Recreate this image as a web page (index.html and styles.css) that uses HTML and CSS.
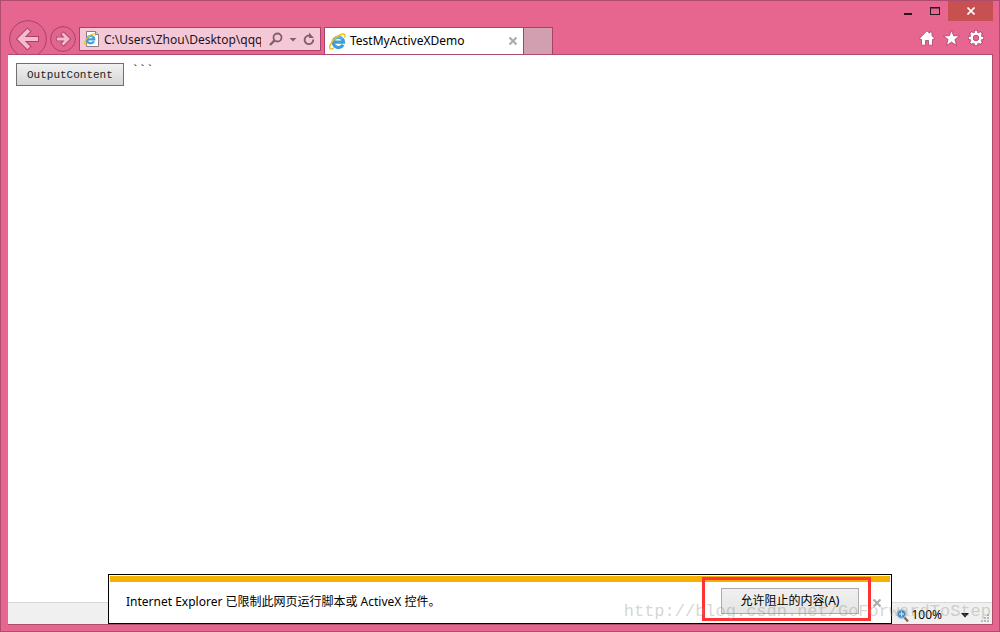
FILE: index.html
```html
<!DOCTYPE html>
<html lang="zh-CN">
<head>
<meta charset="utf-8">
<title>TestMyActiveXDemo</title>
<link rel="stylesheet" href="styles.css">
</head>
<body>
<svg class="defs" width="0" height="0" aria-hidden="true">
  <symbol id="ie" viewBox="0 0 16 16">
    <path d="M13.200 11A4.900 4.900 0 1 1 13.700 8.500H5" fill="none" stroke="#3d9fd8" stroke-width="3"/>
    <path d="M4.200 6.500A4.900 4.900 0 0 1 12.500 5.500" fill="none" stroke="#6cc1ea" stroke-width="1"/>
    <path d="M4.500 14.200C1.500 15.800-.3 14.800 1.300 11.200 3.300 6.500 9.500 1.200 13.300.9c2.200-.1 2 1.500 1.300 3.300" fill="none" stroke="#f3bd19" stroke-width="1.400"/>
  </symbol>
</svg>
<div class="window">
  <header class="chrome">
    <nav class="navigation">
      <button class="round back" aria-label="后退"><svg width="38" height="38" viewBox="0 0 38 38"><circle cx="19" cy="19" r="18.3" fill="#e2658f" stroke="#a94269"/><g fill="none"><path d="M30 19H11M20.500 9.500L11 19l9.500 9.500" stroke="#a94269" stroke-width="6"/><path d="M29 19H11M19.800 10.200L11 19l8.800 8.800" stroke="#f6b9ce" stroke-width="4"/></g></svg></button>
      <button class="round forward" aria-label="前进"><svg width="26" height="26" viewBox="0 0 26 26"><circle cx="13" cy="13" r="12.400" fill="#e2658f" stroke="#a94269"/><g fill="none"><path d="M6 13h12M12 7l6 6-6 6" stroke="#a94269" stroke-width="4.600"/><path d="M6.800 13H18M12.500 7.500L18 13l-5.500 5.500" stroke="#f6b9ce" stroke-width="2.800"/></g></svg></button>
      <div class="address">
        <svg class="page-icon" width="16" height="16" viewBox="0 0 16 16" aria-hidden="true"><path d="M2.500.5h9l3 3v12h-12z" fill="#fff" stroke="#8b7b82"/><path d="M11.500.5v3h3" fill="#ddd" stroke="#8b7b82"/><svg x="0" y="2" width="12" height="12"><use href="#ie"/></svg></svg>
        <input class="url" aria-label="地址" value="C:\Users\Zhou\Desktop\qqq">
        <button class="tool" aria-label="搜索"><svg width="14" height="14" viewBox="0 0 14 14"><circle cx="8.500" cy="5.500" r="4" fill="none" stroke="#80606d" stroke-width="1.800"/><path d="M5.600 8.400L1 13" stroke="#80606d" stroke-width="2.400"/></svg></button>
        <button class="tool" aria-label="显示下拉列表"><svg width="8" height="14" viewBox="0 0 8 14"><path d="M.5 6h7L4 9.500z" fill="#80606d"/></svg></button>
        <button class="tool" aria-label="刷新"><svg width="12" height="14" viewBox="0 0 12 14"><path d="M10.200 7.500A4.300 4.300 0 1 1 7.500 3.800" fill="none" stroke="#80606d" stroke-width="1.900"/><path d="M6 .5v5.500h5z" fill="#80606d"/></svg></button>
      </div>
    </nav>
    <div class="tab">
      <svg width="17" height="17" aria-hidden="true"><use href="#ie"/></svg>
      <span class="tab-title">TestMyActiveXDemo</span>
      <button class="close" aria-label="关闭选项卡"><svg width="10" height="10" viewBox="0 0 10 10"><path d="M1.500 1.500l7 7m0-7l-7 7" stroke="#aaa" stroke-width="2"/></svg></button>
    </div>
    <button class="new-tab" aria-label="新建选项卡"></button>
    <div class="right">
      <div class="caption">
        <button aria-label="最小化"><svg width="8" height="12" viewBox="0 0 8 12"><path d="M0 9h8" stroke="#271720" stroke-width="2"/></svg></button>
        <button aria-label="最大化"><svg width="10" height="12" viewBox="0 0 10 12"><path d="M0 3h10M.5 2v8M9.500 2v8M0 9.500h10" fill="none" stroke="#271720"/><path d="M0 2.500h10" stroke="#271720"/></svg></button>
        <button class="quit" aria-label="关闭"><svg width="8" height="8" viewBox="0 0 8 8"><path d="M.5.5l7 7m0-7l-7 7" stroke="#fff" stroke-width="1.600"/></svg></button>
      </div>
      <div class="commands">
        <button aria-label="主页"><svg width="16" height="16" viewBox="0 0 16 16"><path d="M8 .8L.8 8v1.500h1.700v5.700h4v-4.700h3v4.700h4V9.500h1.700V8l-2.200-2.200V2h-2.500v1.300z" fill="#fff" stroke="#a94269" stroke-width=".8"/></svg></button>
        <button aria-label="收藏夹"><svg width="17" height="16" viewBox="0 0 17 16"><path d="M8.500.2l2.100 5.500 6 .1-4.700 3.700 1.700 6-5.100-3.400-5.100 3.400 1.700-6L.4 5.800l6-.1z" fill="#fff" stroke="#a94269" stroke-width=".8"/></svg></button>
        <button aria-label="工具"><svg width="16" height="16" viewBox="0 0 16 16"><g stroke="#a94269" stroke-width="4"><path d="M8 0v16M0 8h16M2.300 2.300l11.400 11.400M13.700 2.300L2.300 13.700"/></g><g stroke="#fff" stroke-width="2.500"><path d="M8 .7v14.600M.7 8h14.600M2.900 2.900l10.200 10.200M13.100 2.900L2.900 13.100"/></g><circle cx="8" cy="8" r="4.200" fill="#e66690" stroke="#fff" stroke-width="2.600"/><circle cx="8" cy="8" r="2.700" fill="#e66690" stroke="#a94269" stroke-width=".7"/></svg></button>
      </div>
    </div>
  </header>
  <div class="view">
    <main class="document"><button class="output">OutputContent</button><span class="ticks">```</span></main>
    <footer class="status">
      <button class="zoom"><svg width="13" height="13" viewBox="0 0 13 13" aria-hidden="true"><path d="M8 8l4 4.500" stroke="#8e6247" stroke-width="2.200"/><circle cx="5.500" cy="5" r="4.200" fill="#2f86ca" stroke="#9bbdd4" stroke-width="1.300"/><path d="M3 5h5M5.500 2.500v5" stroke="#fff" stroke-width="1.200"/></svg><span>100%</span><svg class="caret" width="8" height="5" viewBox="0 0 8 5" aria-hidden="true"><path d="M0 0h8L4 4.500z" fill="#111"/></svg></button>
      <svg width="9" height="9" viewBox="0 0 9 9" aria-hidden="true"><path d="M6 0h2v2H6zM3 3h2v2H3zM6 3h2v2H6zM0 6h2v2H0zM3 6h2v2H3zM6 6h2v2H6z" fill="#b8b8b8"/></svg>
    </footer>
    <section class="notice" aria-label="通知">
      <p>Internet Explorer 已限制此网页运行脚本或 ActiveX 控件。</p>
      <div class="highlight"><button class="allow">允许阻止的内容(A)</button></div>
      <button class="close" aria-label="关闭通知"><svg width="10" height="10" viewBox="0 0 10 10"><path d="M1.500 1.500l7 7m0-7l-7 7" stroke="#aaa" stroke-width="2"/></svg></button>
    </section>
  </div>
  <div class="watermark">http://blog.csdn.net/GoForwardToStep</div>
</div>
</body>
</html>
```
FILE: styles.css
```css
* { box-sizing: border-box; }
body { margin: 0; font: 12px/16px "Noto Sans", "Noto Sans CJK SC", sans-serif; color: #000; }
button { font: inherit; color: inherit; border: 0; padding: 0; background: none; }
svg { display: block; flex: none; }
.defs { position: absolute; }
.window { position: relative; display: flex; flex-direction: column; height: 100vh; padding: 0 6px 6px 7px; background: #e66690; border: 1px solid #b04b70; }
.chrome { display: flex; align-items: flex-end; height: 53px; flex: none; }
.navigation { display: flex; align-items: flex-start; height: 34px; margin-left: 1px; overflow: hidden; }
.round { flex: none; }
.forward { margin: 6px 0 0 3px; }
.address { display: flex; align-items: center; width: 242px; height: 24px; margin: 7px 0 0 3px; padding: 0 5px 0 4px; gap: 4px; background: #f5c8d8; border: 1px solid #a94269; }
.tool + .tool { margin-left: 2px; }
.url { flex: 1; min-width: 0; height: 20px; margin-right: 4px; padding: 0; border: 0; outline: 0; background: none; font: inherit; color: #20151a; }
.tab { display: flex; align-items: center; width: 200px; height: 27px; margin-left: 3px; padding: 0 5px 0 4px; gap: 4px; background: #fff; border: 1px solid #a94269; border-bottom: 0; }
.tab-title { flex: 1; }
.new-tab { width: 29px; height: 27px; background: #d29fb0; border: 1px solid #a94269; border-width: 1px 1px 0 0; }
.right { display: flex; flex-direction: column; align-items: flex-end; height: 53px; margin-left: auto; }
.caption { display: flex; align-items: center; height: 20px; gap: 18px; }
.quit { display: flex; align-items: center; justify-content: center; width: 45px; height: 20px; margin-left: -10px; background: #c75050; }
.commands { display: flex; gap: 8px; margin: 9px 9px 0 0; }
.view { position: relative; display: flex; flex-direction: column; flex: 1; min-height: 0; background: #fff; border: 1px solid #b04b70; border-width: 1px 1px 1px 0; }
.document { display: flex; flex: 1; align-items: flex-start; gap: 8px; padding: 8px; font: 12px/16px "Liberation Mono", monospace; }
.output { height: 23px; padding: 0 10px; font-size: 11px; color: #222; border: 1px solid #707070; background: linear-gradient(#f1f1f1, #d5d5d5); }
.status { display: flex; align-items: flex-end; justify-content: flex-end; height: 22px; padding: 0 2px 1px; gap: 12px; background: #f0f0f0; border-top: 1px solid #d7d7d7; }
.zoom { display: flex; align-items: center; gap: 2px; }
.caret { margin-left: 17px; }
.notice { position: absolute; bottom: 0; left: 100px; right: 100px; display: flex; align-items: center; height: 50px; padding: 0 9px 0 17px; background: #fff; border: 1px solid #000; }
.notice::before { content: ""; position: absolute; top: 1px; left: 1px; right: 1px; height: 6px; background: #f5b000; }
.notice p { flex: 1; margin: 6px 0 0; }
.highlight { position: relative; width: 169px; height: 44px; padding: 8px 9px 4px 16px; border: 3px solid #ff3333; }
.allow { display: block; width: 100%; height: 26px; border: 1px solid #acacac; background: linear-gradient(#f0f0f0, #e5e5e5); }
.notice > .close { margin: 7px 0 0 1px; }
.watermark { position: absolute; right: 8px; bottom: 9px; font: 17px/20px "Liberation Mono", monospace; color: rgba(145, 150, 135, .4); pointer-events: none; }
```
